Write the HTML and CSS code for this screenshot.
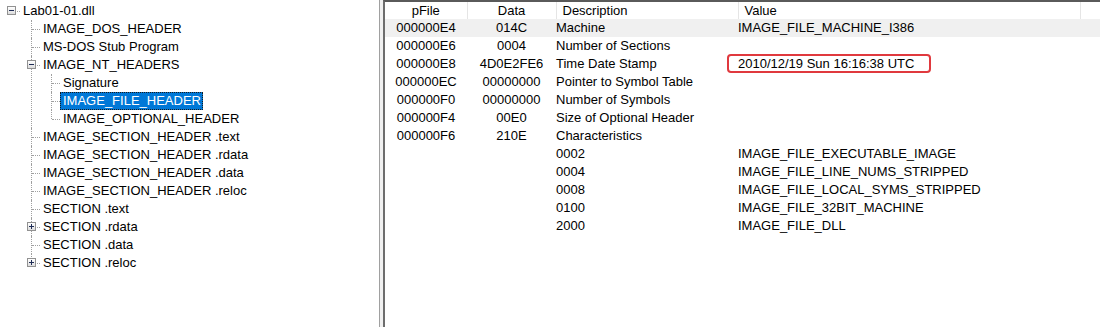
FILE: index.html
```html
<!DOCTYPE html>
<html lang="en">

<head>
	<meta charset="UTF-8">
	<title>Lab01-01.dll - FILE HEADER</title>
	<link rel="stylesheet" href="styles.css">
</head>

<body>
	<div class="tree-pane">
		<ul class="tree">
			<li class="root">
				<div class="row"><span class="toggle"></span><span class="label">Lab01-01.dll</span></div>
				<ul>
					<li><div class="row"><span class="label">IMAGE_DOS_HEADER</span></div></li>
					<li><div class="row"><span class="label">MS-DOS Stub Program</span></div></li>
					<li>
						<div class="row"><span class="toggle"></span><span class="label">IMAGE_NT_HEADERS</span></div>
						<ul>
							<li><div class="row"><span class="label">Signature</span></div></li>
							<li><div class="row"><span class="label selected">IMAGE_FILE_HEADER</span></div></li>
							<li><div class="row"><span class="label">IMAGE_OPTIONAL_HEADER</span></div></li>
						</ul>
					</li>
					<li><div class="row"><span class="label">IMAGE_SECTION_HEADER .text</span></div></li>
					<li><div class="row"><span class="label">IMAGE_SECTION_HEADER .rdata</span></div></li>
					<li><div class="row"><span class="label">IMAGE_SECTION_HEADER .data</span></div></li>
					<li><div class="row"><span class="label">IMAGE_SECTION_HEADER .reloc</span></div></li>
					<li><div class="row"><span class="label">SECTION .text</span></div></li>
					<li><div class="row"><span class="toggle plus"></span><span class="label">SECTION .rdata</span></div></li>
					<li><div class="row"><span class="label">SECTION .data</span></div></li>
					<li><div class="row"><span class="toggle plus"></span><span class="label">SECTION .reloc</span></div></li>
				</ul>
			</li>
		</ul>
	</div>

	<div class="splitter"></div>

	<div class="list-pane">
		<table class="grid">
			<colgroup>
				<col style="width: 82px">
				<col style="width: 89px">
				<col style="width: 182px">
				<col style="width: 342px">
				<col>
			</colgroup>
			<thead>
				<tr>
					<th class="center">pFile</th>
					<th class="center">Data</th>
					<th>Description</th>
					<th>Value</th>
					<th class="filler"></th>
				</tr>
			</thead>
			<tbody>
				<tr class="hot">
					<td class="center">000000E4</td>
					<td class="center">014C</td>
					<td>Machine</td>
					<td>IMAGE_FILE_MACHINE_I386</td>
					<td></td>
				</tr>
				<tr>
					<td class="center">000000E6</td>
					<td class="center">0004</td>
					<td>Number of Sections</td>
					<td></td>
					<td></td>
				</tr>
				<tr>
					<td class="center">000000E8</td>
					<td class="center">4D0E2FE6</td>
					<td>Time Date Stamp</td>
					<td><span class="stamp">2010/12/19 Sun 16:16:38 UTC</span></td>
					<td></td>
				</tr>
				<tr>
					<td class="center">000000EC</td>
					<td class="center">00000000</td>
					<td>Pointer to Symbol Table</td>
					<td></td>
					<td></td>
				</tr>
				<tr>
					<td class="center">000000F0</td>
					<td class="center">00000000</td>
					<td>Number of Symbols</td>
					<td></td>
					<td></td>
				</tr>
				<tr>
					<td class="center">000000F4</td>
					<td class="center">00E0</td>
					<td>Size of Optional Header</td>
					<td></td>
					<td></td>
				</tr>
				<tr>
					<td class="center">000000F6</td>
					<td class="center">210E</td>
					<td>Characteristics</td>
					<td></td>
					<td></td>
				</tr>
				<tr>
					<td></td>
					<td></td>
					<td>0002</td>
					<td>IMAGE_FILE_EXECUTABLE_IMAGE</td>
					<td></td>
				</tr>
				<tr>
					<td></td>
					<td></td>
					<td>0004</td>
					<td>IMAGE_FILE_LINE_NUMS_STRIPPED</td>
					<td></td>
				</tr>
				<tr>
					<td></td>
					<td></td>
					<td>0008</td>
					<td>IMAGE_FILE_LOCAL_SYMS_STRIPPED</td>
					<td></td>
				</tr>
				<tr>
					<td></td>
					<td></td>
					<td>0100</td>
					<td>IMAGE_FILE_32BIT_MACHINE</td>
					<td></td>
				</tr>
				<tr>
					<td></td>
					<td></td>
					<td>2000</td>
					<td>IMAGE_FILE_DLL</td>
					<td></td>
				</tr>
			</tbody>
		</table>
	</div>
</body>

</html>
```

FILE: styles.css
```css
body {
	margin: 0;
	display: flex;
	height: 327px;
	overflow: hidden;
	background: #fff;
	font-family: 'Liberation Sans', Arial, sans-serif;
	font-size: 13px;
	color: #000;
}

/* left tree */
.tree-pane {
	width: 379px;
	padding-top: 2px;
	border-right: 1px solid #a0a0a0;
	background: #fff;
	overflow: hidden;
}

.tree,
.tree ul {
	list-style: none;
	margin: 0;
	padding: 0;
}

.tree ul {
	padding-left: 20px;
}

.tree li {
	position: relative;
}

/* sibling line */
.tree ul > li::before {
	content: '';
	position: absolute;
	left: 11px;
	top: 0;
	height: 100%;
	border-left: 1px dotted #a0a0a0;
}

.tree ul > li:last-child::before {
	height: 9px;
}

.row {
	position: relative;
	display: flex;
	align-items: center;
	height: 18px;
	padding-left: 20px;
}

/* branch line */
.row::before {
	content: '';
	position: absolute;
	left: 12px;
	top: 9px;
	width: 8px;
	border-top: 1px dotted #a0a0a0;
}

.label {
	padding: 0 2px 0 3px;
	line-height: 18px;
	white-space: nowrap;
}

.label.selected {
	background: #0078d7;
	color: #fff;
	outline: 1px dotted #1b1b1b;
	outline-offset: -1px;
}

.toggle {
	position: absolute;
	left: 7px;
	top: 4px;
	width: 7px;
	height: 7px;
	border: 1px solid #919191;
	background: linear-gradient(#ffffff, #dcdcdc);
	z-index: 1;
}

.toggle::before {
	content: '';
	position: absolute;
	left: 1px;
	top: 3px;
	width: 5px;
	height: 1px;
	background: #1e2c55;
}

.toggle.plus::after {
	content: '';
	position: absolute;
	left: 3px;
	top: 1px;
	width: 1px;
	height: 5px;
	background: #1e2c55;
}

/* splitter between panes */
.splitter {
	width: 3px;
	background: #f0f0f0;
}

/* right list */
.list-pane {
	flex: 1;
	border-left: 2px solid #6d6d6d;
	border-top: 2px solid #5a5a5a;
	background: #fff;
	overflow: hidden;
}

.grid {
	width: 100%;
	table-layout: fixed;
	border-collapse: collapse;
}

.grid th {
	height: 17px;
	padding: 0 0 0 6px;
	font-weight: normal;
	text-align: left;
	line-height: 17px;
	border-right: 1px solid #e5e5e5;
	white-space: nowrap;
}

.grid th.center {
	padding: 0;
	text-align: center;
}

.grid th.filler {
	border-right: none;
}

.grid td {
	height: 18px;
	padding: 0;
	line-height: 18px;
	white-space: nowrap;
	overflow: visible;
}

.grid .center {
	text-align: center;
}

.grid tr.hot td {
	background: #f0f0f0;
}

.stamp {
	position: relative;
	display: inline-block;
	line-height: 18px;
}

.stamp::after {
	content: '';
	position: absolute;
	left: -11px;
	right: -17px;
	top: -1px;
	bottom: 0;
	border: 2px solid #e0393e;
	border-radius: 4px;
}
```
